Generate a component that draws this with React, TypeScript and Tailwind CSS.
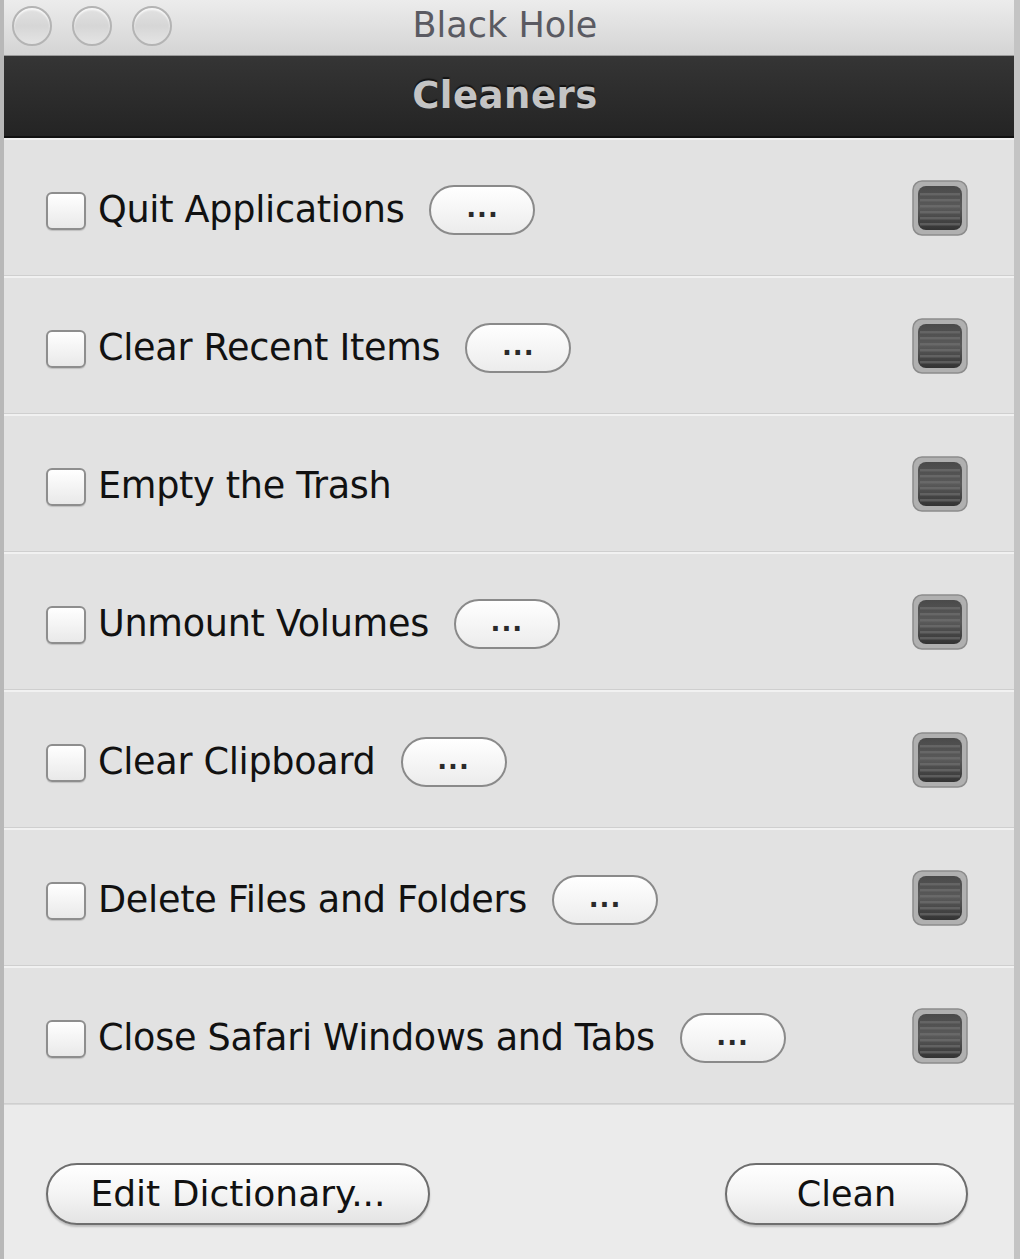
import React from "react";

const items = [
  { label: "Quit Applications", more: true },
  { label: "Clear Recent Items", more: true },
  { label: "Empty the Trash", more: false },
  { label: "Unmount Volumes", more: true },
  { label: "Clear Clipboard", more: true },
  { label: "Delete Files and Folders", more: true },
  { label: "Close Safari Windows and Tabs", more: true },
];

const font = { fontFamily: '"DejaVu Sans", Verdana, sans-serif' };

const Light = () => (
  <div className="w-[40px] h-[40px] rounded-full border-2 border-[#b4b4b4] bg-gradient-to-b from-[#e2e2e2] via-[#d6d6d6] to-[#e4e4e4] shadow-[inset_0_2px_2px_rgba(255,255,255,0.8)]" />
);

const Indicator = () => (
  <svg width="56" height="56" viewBox="0 0 56 56">
    <defs>
      <linearGradient id="ind" x1="0" y1="0" x2="0" y2="1">
        <stop offset="0" stopColor="#4a4a4a" />
        <stop offset="0.5" stopColor="#5a5a5a" />
        <stop offset="1" stopColor="#333" />
      </linearGradient>
    </defs>
    <rect x="1" y="1" width="54" height="54" rx="9" fill="#b0b0b0" stroke="#8c8c8c" strokeWidth="1.5" />
    <rect x="6" y="6" width="44" height="44" rx="8" fill="url(#ind)" />
    {[13, 19, 25, 31, 37, 43].map((y) => (
      <rect key={y} x="8" y={y} width="40" height="2.5" fill="#777" opacity="0.55" />
    ))}
  </svg>
);

const Row = ({ label, more }: { label: string; more: boolean }) => (
  <div className="h-[138px] flex items-center pl-[42px] pr-[46px] bg-[#e2e2e2] border-t-2 border-t-[#f1f1f1] border-b border-b-[#cfcfcf]">
    <div className="w-[40px] h-[38px] rounded-[6px] border-2 border-[#8e8e8e] bg-gradient-to-b from-[#ffffff] to-[#e9e9e9] shadow-[0_1px_1px_rgba(0,0,0,0.15)] mt-[6px]" />
    <span className="ml-[12px] text-[36.6px] text-[#111] mt-[6px] tracking-[-0.3px]">{label}</span>
    {more && (
      <button className="ml-[25px] mt-[4px] w-[106px] h-[50px] rounded-full border-2 border-[#8a8a8a] bg-gradient-to-b from-[#ffffff] to-[#ececec] text-[26px] font-bold leading-none text-[#2a2a2a] pb-[4px] tracking-[1px]">
        ...
      </button>
    )}
    <div className="ml-auto">
      <Indicator />
    </div>
  </div>
);

export default function App() {
  return (
    <div
      className="w-[1020px] h-[1259px] flex flex-col bg-[#ebebeb] border-l-4 border-l-[#b8b8b8] border-r-[6px] border-r-[#c4c4c4] overflow-hidden"
      style={font}
    >
      <div className="h-[56px] relative flex items-center justify-center bg-gradient-to-b from-[#ececec] to-[#d4d4d4] border-b border-[#9a9a9a]">
        <div className="absolute left-[8px] top-[6px] flex gap-[20px]">
          <Light />
          <Light />
          <Light />
        </div>
        <span className="text-[35px] text-[#5a5a62] mt-[-4px] ml-[-8px]">Black Hole</span>
      </div>
      <div className="h-[82px] flex items-center justify-center bg-gradient-to-b from-[#353535] to-[#242424] border-b-2 border-[#111]">
        <span className="text-[37px] font-bold text-[#c4c4c4] tracking-[0.5px] ml-[-8px] [text-shadow:0_-2px_1px_rgba(0,0,0,0.6)]">
          Cleaners
        </span>
      </div>
      {items.map((it) => (
        <Row key={it.label} label={it.label} more={it.more} />
      ))}
      <div className="flex-1 flex items-center justify-between pl-[42px] pr-[46px] pt-[24px] border-t border-[#d8d8d8]">
        <button className="w-[384px] h-[62px] rounded-full border-2 border-[#6e6e6e] bg-gradient-to-b from-[#ffffff] via-[#f4f4f4] to-[#e4e4e4] shadow-[0_2px_2px_rgba(0,0,0,0.2)] text-[36px] text-[#111]">
          Edit Dictionary...
        </button>
        <button className="w-[243px] h-[62px] rounded-full border-2 border-[#6e6e6e] bg-gradient-to-b from-[#ffffff] via-[#f4f4f4] to-[#e4e4e4] shadow-[0_2px_2px_rgba(0,0,0,0.2)] text-[35px] text-[#111]">
          Clean
        </button>
      </div>
    </div>
  );
}
